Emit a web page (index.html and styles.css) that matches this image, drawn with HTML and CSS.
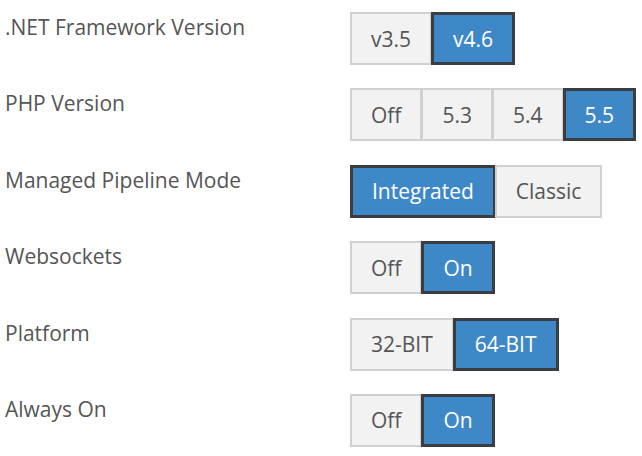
FILE: index.html
```html
<!DOCTYPE html>
<html>
<head>
<meta charset="utf-8">
<link rel="stylesheet" href="styles.css">
</head>
<body>
<div class="settings">
  <div class="row">
    <div class="label">.NET Framework Version</div>
    <div class="group">
      <span class="btn">v3.5</span><span class="btn active">v4.6</span>
    </div>
  </div>
  <div class="row">
    <div class="label">PHP Version</div>
    <div class="group">
      <span class="btn">Off</span><span class="btn">5.3</span><span class="btn">5.4</span><span class="btn active">5.5</span>
    </div>
  </div>
  <div class="row">
    <div class="label">Managed Pipeline Mode</div>
    <div class="group">
      <span class="btn active">Integrated</span><span class="btn">Classic</span>
    </div>
  </div>
  <div class="row">
    <div class="label">Websockets</div>
    <div class="group">
      <span class="btn">Off</span><span class="btn active">On</span>
    </div>
  </div>
  <div class="row">
    <div class="label">Platform</div>
    <div class="group">
      <span class="btn">32-BIT</span><span class="btn active">64-BIT</span>
    </div>
  </div>
  <div class="row">
    <div class="label">Always On</div>
    <div class="group">
      <span class="btn">Off</span><span class="btn active">On</span>
    </div>
  </div>
</div>
</body>
</html>
```

FILE: styles.css
```css
html, body {
  margin: 0;
  padding: 0;
  background: #ffffff;
}
body {
  font-family: "Open Sans", "DejaVu Sans", sans-serif;
  color: #555555;
}
.settings {
  display: flex;
  flex-direction: column;
  gap: 23.4px;
  padding: 12px 0 0 5px;
}
.row {
  display: grid;
  grid-template-columns: 345px auto;
  align-items: start;
  height: 53px;
}
.label {
  font-size: 21px;
  line-height: 28px;
  padding-top: 1px;
  color: #555555;
}
.group {
  display: flex;
}
.btn {
  box-sizing: border-box;
  height: 53px;
  display: flex;
  align-items: center;
  justify-content: center;
  padding: 0 19px;
  font-size: 21px;
  color: #555555;
  background: #f2f2f2;
  border: 2px solid #d0d0d0;
}
.btn + .btn {
  margin-left: -1px;
}
.btn.active {
  background: #3e88c8;
  color: #ffffff;
  border: 3px solid #3a3e42;
}
```
